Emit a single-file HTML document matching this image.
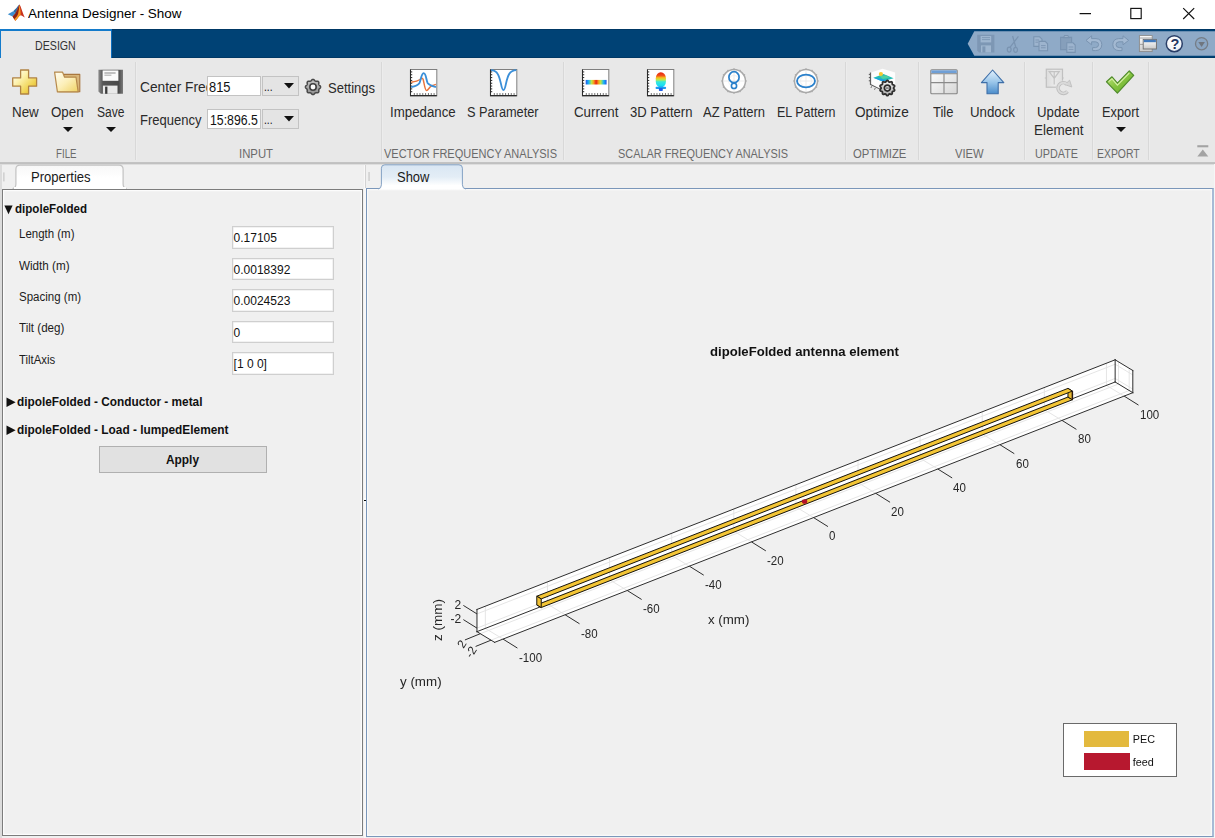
<!DOCTYPE html>
<html lang="en"><head><meta charset="utf-8"><title>Antenna Designer - Show</title>
<style>
html,body{margin:0;padding:0}
body{width:1215px;height:838px;overflow:hidden;position:relative;background:#f0f0f0;font-family:"Liberation Sans",sans-serif}
.a{position:absolute;box-sizing:border-box}
.t{position:absolute;white-space:nowrap;line-height:1;transform-origin:0 0;display:block}
svg{overflow:visible}
</style></head>
<body>
<div class="a" style="left:0px;top:0px;width:1215px;height:29px;background:#fff"></div>
<svg class="a" style="left:7px;top:4px" width="19" height="18" viewBox="0 0 19 18">
<path d="M0.8 10.2 L6.2 7.2 L8.4 9.6 L5.6 12.6 Z" fill="#3d8fce"/>
<path d="M6.2 7.2 C8.6 5.4 10.4 2.6 12.4 0.6 L10.6 6.5 L8.4 9.6 Z" fill="#2f6ea5"/>
<path d="M12.4 0.6 C13.8 1.6 15.6 9.5 17.8 13.4 C16 12.6 14.6 11.2 13.6 11.2 C12 11.4 10.4 15.2 8.2 16.8 L5.6 12.6 L8.4 9.6 Z" fill="#c8321f"/>
<path d="M5.6 12.6 L8.4 9.6 L10.6 6.0 L12.4 0.6 L12.2 6 L10.9 11.4 L8.3 15.4 L7.0 14.8 Z" fill="#8a2416"/>
<path d="M12.4 0.6 C13.3 4 13.7 8 13.6 11.2 C12 11.4 10.4 15.2 8.2 16.8 L7.3 15.3 C9.3 13.4 10.6 11.6 11.2 9.6 C11.8 7 12.2 4 12.4 0.6 Z" fill="#f6981d"/>
</svg>
<span class="t" style="left:28.30px;top:7.02px;font-size:13.33px;color:#000;transform:scaleX(1.0111);">Antenna Designer - Show</span>
<svg class="a" style="left:1075px;top:-0.5px" width="130" height="28" viewBox="0 0 130 28">
<path d="M4.6 13.6 H16" stroke="#111" stroke-width="1.25" fill="none"/>
<rect x="55.8" y="8.4" width="10.4" height="10.2" stroke="#111" stroke-width="1.15" fill="none"/>
<path d="M108.2 8.2 L119.2 19 M119.2 8.2 L108.2 19" stroke="#111" stroke-width="1.15" fill="none"/>
</svg>
<div class="a" style="left:0px;top:29px;width:1215px;height:29.3px;background:#004275;border-top:1px solid #003865;border-bottom:1px solid #003865"></div>
<div class="a" style="left:0px;top:29px;width:112.2px;height:29.3px;background:#e8e8e8;border-top:2px solid #147bcb;border-left:1px solid #147bcb;border-right:1.2px solid #0b6cbd"></div>
<span class="t" style="left:35.40px;top:39.42px;font-size:13.33px;color:#333;transform:scaleX(0.7983);">DESIGN</span>
<svg class="a" style="left:960px;top:29px" width="255" height="29" viewBox="0 0 255 29">
<path d="M7.7 14.7 L14.3 2.3 H255 V26.7 H14.3 Z" fill="#8faac7"/>
<g fill="#7d97b4" stroke="none">
<!-- save -->
<path d="M17.2 5.8 H34.4 V23.4 H19 L17.2 21.6 Z"/>
<rect x="20.6" y="7" width="10.6" height="6.4" fill="#9fb6cf"/>
<path d="M22 8.6 H30 M22 10.6 H30" stroke="#7d97b4" stroke-width="0.9"/>
<rect x="21" y="16.4" width="10" height="7" fill="#9fb6cf"/><rect x="22.4" y="17.4" width="3" height="6" fill="#7d97b4"/>
</g>
<!-- scissors -->
<g fill="none" stroke="#7a94b1" stroke-width="1.25">
<path d="M52.6 7 L56 19 M58.4 7.4 L49.8 18.6"/>
<ellipse cx="49.2" cy="20.6" rx="1.9" ry="2.5"/><ellipse cx="55.6" cy="20.8" rx="1.9" ry="2.5"/>
</g>
<!-- copy -->
<g fill="#9db4ce" stroke="#7a94b1" stroke-width="1.1">
<path d="M73.8 7.8 H79.6 L82 10.2 V17.4 H73.8 Z"/>
<path d="M79 12.4 H85.2 L87.6 14.8 V21.8 H79 Z"/>
<path d="M75.4 11 H79 M75.4 13.2 H78 M81 16.6 H85.6 M81 18.8 H85.6" stroke-width="0.9"/>
</g>
<!-- paste -->
<g fill="#9db4ce" stroke="#7a94b1" stroke-width="1.1">
<path d="M100.6 8.4 H111.6 V20.6 H100.6 Z" fill="#869fbb"/>
<path d="M103.6 8.6 L104.6 6.6 H107.8 L108.8 8.6 Z" fill="#a9bdd4"/>
<path d="M106.8 13.8 H113 L115.2 16 V23.4 H106.8 Z"/>
<path d="M108.6 18 H113.4 M108.6 20.4 H113.4" stroke-width="0.9"/>
</g>
<!-- undo -->
<g fill="#a3b9d2" stroke="#7a94b1" stroke-width="1">
<path d="M126 11.4 L131.6 6.8 V9.6 H136 Q141.6 10 141.8 15.6 Q141.6 21.4 135.6 21.6 H132.6 V18.6 H135.4 Q138.6 18.4 138.6 15.6 Q138.6 13 135.6 12.8 H131.6 V15.8 Z"/>
<path d="M168.6 11.4 L163 6.8 V9.6 H158.6 Q153 10 152.8 15.6 Q153 21.4 159 21.6 H162 V18.6 H159.2 Q156 18.4 156 15.6 Q156 13 159 12.8 H163 V15.8 Z"/>
</g>
<!-- windows -->
<defs><linearGradient id="gw" x1="0" y1="0" x2="0" y2="1"><stop offset="0" stop-color="#ffffff"/><stop offset="1" stop-color="#c9c9c9"/></linearGradient></defs>
<rect x="179.4" y="6.6" width="12.8" height="16" fill="url(#gw)" stroke="#8a8a8a" stroke-width="0.9"/>
<path d="M180 9 H192 M180 15.4 H183" stroke="#9a9a9a" stroke-width="0.9"/>
<rect x="183.2" y="10.4" width="13.2" height="9.6" fill="url(#gw)" stroke="#6d6d6d" stroke-width="0.9"/>
<rect x="183.7" y="10.8" width="12.2" height="2.4" fill="#4179bb"/>
<!-- help -->
<defs><radialGradient id="gh" cx="0.4" cy="0.3" r="0.8"><stop offset="0" stop-color="#ffffff"/><stop offset="0.7" stop-color="#f2f4f8"/><stop offset="1" stop-color="#c9d3e3"/></radialGradient></defs>
<circle cx="214.3" cy="14.7" r="8" fill="url(#gh)" stroke="#2a3f68" stroke-width="1.5"/>
<!-- dropdown -->
<circle cx="241.6" cy="14.7" r="6.1" fill="#8aa5c2" stroke="#767d86" stroke-width="1.3"/>
<path d="M238.3 12.9 H244.9 L241.6 17.9 Z" fill="#6f767f"/>
</svg>
<span class="t" style="left:1170.60px;top:36.73px;font-size:14.5px;color:#1f3561;font-weight:bold;">?</span>
<div class="a" style="left:0px;top:58px;width:1215px;height:104px;background:#e8e8e8"></div>
<div class="a" style="left:0px;top:161.8px;width:1215px;height:1.2px;background:#c3c3c3"></div>
<div class="a" style="left:0px;top:163px;width:1215px;height:0.9px;background:#c0c0c0"></div>
<div class="a" style="left:0px;top:163.9px;width:1215px;height:0.8px;background:#dedede"></div>
<div class="a" style="left:135px;top:62px;width:1.2px;height:98px;background:#d8d8d8"></div>
<div class="a" style="left:136.2px;top:62px;width:1px;height:98px;background:#ececec"></div>
<div class="a" style="left:381px;top:62px;width:1.2px;height:98px;background:#d8d8d8"></div>
<div class="a" style="left:382.2px;top:62px;width:1px;height:98px;background:#ececec"></div>
<div class="a" style="left:563px;top:62px;width:1.2px;height:98px;background:#d8d8d8"></div>
<div class="a" style="left:564.2px;top:62px;width:1px;height:98px;background:#ececec"></div>
<div class="a" style="left:845px;top:62px;width:1.2px;height:98px;background:#d8d8d8"></div>
<div class="a" style="left:846.2px;top:62px;width:1px;height:98px;background:#ececec"></div>
<div class="a" style="left:918px;top:62px;width:1.2px;height:98px;background:#d8d8d8"></div>
<div class="a" style="left:919.2px;top:62px;width:1px;height:98px;background:#ececec"></div>
<div class="a" style="left:1024px;top:62px;width:1.2px;height:98px;background:#d8d8d8"></div>
<div class="a" style="left:1025.2px;top:62px;width:1px;height:98px;background:#ececec"></div>
<div class="a" style="left:1092px;top:62px;width:1.2px;height:98px;background:#d8d8d8"></div>
<div class="a" style="left:1093.2px;top:62px;width:1px;height:98px;background:#ececec"></div>
<div class="a" style="left:1148px;top:62px;width:1.2px;height:98px;background:#d8d8d8"></div>
<div class="a" style="left:1149.2px;top:62px;width:1px;height:98px;background:#ececec"></div>
<span class="t" style="left:11.55px;top:105.45px;font-size:14px;color:#2a2a2a;transform:scaleX(0.9533);">New</span>
<span class="t" style="left:51.40px;top:105.45px;font-size:14px;color:#2a2a2a;transform:scaleX(0.9519);">Open</span>
<span class="t" style="left:96.75px;top:105.45px;font-size:14px;color:#2a2a2a;transform:scaleX(0.8618);">Save</span>
<svg class="a" style="left:63.3px;top:127px" width="10" height="5" viewBox="0 0 10 5"><path d="M0 0 H10 L5.0 5 Z" fill="#111"/></svg>
<svg class="a" style="left:106.1px;top:127px" width="10" height="5" viewBox="0 0 10 5"><path d="M0 0 H10 L5.0 5 Z" fill="#111"/></svg>
<span class="t" style="left:55.55px;top:148.44px;font-size:12px;color:#6a6a6a;transform:scaleX(0.8089);">FILE</span>
<span class="t" style="left:140.40px;top:79.85px;font-size:14px;color:#2a2a2a;transform:scaleX(0.9826);clip-path:inset(0 6.5px 0 0);">Center Freq</span>
<span class="t" style="left:140.40px;top:112.65px;font-size:14px;color:#2a2a2a;transform:scaleX(0.9298);">Frequency</span>
<span class="t" style="left:239.00px;top:148.44px;font-size:12px;color:#6a6a6a;transform:scaleX(0.9444);">INPUT</span>
<div class="a" style="left:207px;top:76px;width:54px;height:20px;background:#fff;border:1px solid #c3c3c3"></div>
<div class="a" style="left:262px;top:76px;width:37px;height:20px;background:#e4e4e4;border:1px solid #c3c3c3"></div>
<span class="t" style="left:263.60px;top:79.92px;font-size:13.33px;color:#111;transform:scaleX(0.7741);">...</span>
<svg class="a" style="left:284.0px;top:83px" width="10" height="5.5" viewBox="0 0 10 5.5"><path d="M0 0 H10 L5.0 5.5 Z" fill="#111"/></svg>
<div class="a" style="left:207px;top:109px;width:54px;height:20px;background:#fff;border:1px solid #c3c3c3"></div>
<div class="a" style="left:262px;top:109px;width:37px;height:20px;background:#e4e4e4;border:1px solid #c3c3c3"></div>
<span class="t" style="left:263.60px;top:112.92px;font-size:13.33px;color:#111;transform:scaleX(0.7741);">...</span>
<svg class="a" style="left:284.0px;top:116px" width="10" height="5.5" viewBox="0 0 10 5.5"><path d="M0 0 H10 L5.0 5.5 Z" fill="#111"/></svg>
<span class="t" style="left:208.80px;top:79.75px;font-size:14px;color:#111;transform:scaleX(0.9204);">815</span>
<span class="t" style="left:209.60px;top:112.65px;font-size:14px;color:#111;transform:scaleX(0.8771);">15:896.5</span>
<svg class="a" style="left:304.2px;top:78.3px" width="18" height="18" viewBox="0 0 18 18">
<defs><linearGradient id="ggr" x1="0" y1="0" x2="0" y2="1"><stop offset="0" stop-color="#c4c4c4"/><stop offset="1" stop-color="#8e8e8e"/></linearGradient></defs>
<g transform="translate(9,9)">
<path d="M0.00 -7.62 L0.49 -7.54 L0.96 -7.29 L1.37 -6.87 L1.72 -6.42 L2.07 -6.11 L2.44 -5.89 L2.85 -5.78 L3.32 -5.75 L3.89 -5.82 L4.48 -5.84 L4.98 -5.68 L5.39 -5.39 L5.68 -4.98 L5.84 -4.48 L5.82 -3.89 L5.75 -3.32 L5.78 -2.85 L5.89 -2.44 L6.11 -2.07 L6.42 -1.72 L6.87 -1.37 L7.29 -0.96 L7.54 -0.49 L7.62 -0.00 L7.54 0.49 L7.29 0.96 L6.87 1.37 L6.42 1.72 L6.11 2.07 L5.89 2.44 L5.78 2.85 L5.75 3.32 L5.82 3.89 L5.84 4.48 L5.68 4.98 L5.39 5.39 L4.98 5.68 L4.48 5.84 L3.89 5.82 L3.32 5.75 L2.85 5.78 L2.44 5.89 L2.07 6.11 L1.72 6.42 L1.37 6.87 L0.96 7.29 L0.49 7.54 L0.00 7.62 L-0.49 7.54 L-0.96 7.29 L-1.37 6.87 L-1.72 6.42 L-2.07 6.11 L-2.44 5.89 L-2.85 5.78 L-3.32 5.75 L-3.89 5.82 L-4.48 5.84 L-4.98 5.68 L-5.39 5.39 L-5.68 4.98 L-5.84 4.48 L-5.82 3.89 L-5.75 3.32 L-5.78 2.85 L-5.89 2.44 L-6.11 2.07 L-6.42 1.72 L-6.87 1.37 L-7.29 0.96 L-7.54 0.49 L-7.62 0.00 L-7.54 -0.49 L-7.29 -0.96 L-6.87 -1.37 L-6.42 -1.72 L-6.11 -2.07 L-5.89 -2.44 L-5.78 -2.85 L-5.75 -3.32 L-5.82 -3.89 L-5.84 -4.48 L-5.68 -4.98 L-5.39 -5.39 L-4.98 -5.68 L-4.48 -5.84 L-3.89 -5.82 L-3.32 -5.75 L-2.85 -5.78 L-2.44 -5.89 L-2.07 -6.11 L-1.72 -6.42 L-1.37 -6.87 L-0.96 -7.29 L-0.49 -7.54 Z" fill="url(#ggr)" stroke="#484848" stroke-width="1.5" stroke-linejoin="round"/>
<circle r="3.2" fill="#fafafa" stroke="#404040" stroke-width="1.6"/>
</g></svg>
<span class="t" style="left:328.00px;top:80.75px;font-size:14px;color:#2a2a2a;transform:scaleX(0.9291);">Settings</span>
<span class="t" style="left:390.35px;top:105.45px;font-size:14px;color:#2a2a2a;transform:scaleX(0.9485);">Impedance</span>
<span class="t" style="left:467.20px;top:105.45px;font-size:14px;color:#2a2a2a;transform:scaleX(0.9111);">S Parameter</span>
<span class="t" style="left:383.50px;top:148.44px;font-size:12px;color:#6a6a6a;transform:scaleX(0.9167);">VECTOR FREQUENCY ANALYSIS</span>
<span class="t" style="left:573.60px;top:105.45px;font-size:14px;color:#2a2a2a;transform:scaleX(0.9511);">Current</span>
<span class="t" style="left:629.55px;top:105.45px;font-size:14px;color:#2a2a2a;transform:scaleX(0.9339);">3D Pattern</span>
<span class="t" style="left:703.30px;top:105.45px;font-size:14px;color:#2a2a2a;transform:scaleX(0.9265);">AZ Pattern</span>
<span class="t" style="left:777.25px;top:105.45px;font-size:14px;color:#2a2a2a;transform:scaleX(0.8913);">EL Pattern</span>
<span class="t" style="left:617.50px;top:148.44px;font-size:12px;color:#6a6a6a;transform:scaleX(0.9093);">SCALAR FREQUENCY ANALYSIS</span>
<span class="t" style="left:854.75px;top:105.45px;font-size:14px;color:#2a2a2a;transform:scaleX(0.9722);">Optimize</span>
<span class="t" style="left:853.00px;top:148.44px;font-size:12px;color:#6a6a6a;transform:scaleX(0.9423);">OPTIMIZE</span>
<span class="t" style="left:933.20px;top:105.45px;font-size:14px;color:#2a2a2a;transform:scaleX(0.9256);">Tile</span>
<span class="t" style="left:970.20px;top:105.45px;font-size:14px;color:#2a2a2a;transform:scaleX(0.9480);">Undock</span>
<span class="t" style="left:954.75px;top:148.44px;font-size:12px;color:#6a6a6a;transform:scaleX(0.9358);">VIEW</span>
<span class="t" style="left:1037.40px;top:105.45px;font-size:14px;color:#2a2a2a;transform:scaleX(0.9436);">Update</span>
<span class="t" style="left:1033.80px;top:123.45px;font-size:14px;color:#2a2a2a;transform:scaleX(0.9618);">Element</span>
<span class="t" style="left:1034.50px;top:148.44px;font-size:12px;color:#6a6a6a;transform:scaleX(0.8999);">UPDATE</span>
<span class="t" style="left:1101.70px;top:105.45px;font-size:14px;color:#2a2a2a;transform:scaleX(0.9144);">Export</span>
<svg class="a" style="left:1115.5px;top:127px" width="10" height="5" viewBox="0 0 10 5"><path d="M0 0 H10 L5.0 5 Z" fill="#111"/></svg>
<span class="t" style="left:1096.80px;top:148.44px;font-size:12px;color:#6a6a6a;transform:scaleX(0.8671);">EXPORT</span>
<svg class="a" style="left:1197px;top:145px" width="12" height="12" viewBox="0 0 12 12"><rect x="0.3" y="0.2" width="11" height="2.1" fill="#a3a3a3"/><path d="M0.3 11.4 L5.8 4.6 L11.3 11.4 Z" fill="#a3a3a3"/></svg>
<svg class="a" style="left:12px;top:69px" width="26" height="26" viewBox="0 0 26 26">
<defs><linearGradient id="gp" x1="0" y1="0" x2="1" y2="1"><stop offset="0" stop-color="#ffffff"/><stop offset="0.35" stop-color="#fdf2ae"/><stop offset="0.7" stop-color="#f0d352"/><stop offset="1" stop-color="#dcae22"/></linearGradient></defs>
<path d="M8.6 1 H16.6 V8.9 H24.6 V17.2 H16.6 V25 H8.6 V17.2 H0.7 V8.9 H8.6 Z" fill="url(#gp)" stroke="#b08243" stroke-width="1.3" stroke-linejoin="round"/>
</svg>
<svg class="a" style="left:53px;top:70px" width="29" height="24" viewBox="0 0 29 24">
<defs><linearGradient id="gf" x1="0" y1="0" x2="1" y2="1"><stop offset="0" stop-color="#fffdf2"/><stop offset="0.5" stop-color="#fcefb8"/><stop offset="1" stop-color="#efd264"/></linearGradient></defs>
<path d="M10 4.4 H26.8 V21.8 H6 Z" fill="#d9b679" stroke="#a9773f" stroke-width="1.1" stroke-linejoin="round"/>
<path d="M1.6 2.2 H9.6 L11.6 7.2 H23 L25.2 21.8 H4.4 Z" fill="url(#gf)" stroke="#b78a4c" stroke-width="1.2" stroke-linejoin="round"/>
</svg>
<svg class="a" style="left:98px;top:69px" width="26" height="26" viewBox="0 0 26 26">
<defs><linearGradient id="gs" x1="0" y1="0" x2="1" y2="0"><stop offset="0" stop-color="#8d8d8d"/><stop offset="0.18" stop-color="#555"/><stop offset="0.82" stop-color="#4a4a4a"/><stop offset="1" stop-color="#7b7b7b"/></linearGradient></defs>
<path d="M0.4 0.8 H25 V24.8 H2.8 L0.4 22.6 Z" fill="url(#gs)"/>
<rect x="4.6" y="1.4" width="15.8" height="10.4" fill="#fbfbfb"/>
<rect x="6.4" y="3.4" width="11.2" height="1.2" fill="#9a9a9a"/><rect x="6.4" y="5.6" width="7" height="1.2" fill="#b5b5b5"/>
<rect x="4.9" y="16.6" width="14.6" height="8.2" fill="#e9e9e9"/>
<rect x="7.1" y="17.6" width="2.3" height="7.2" fill="#3a3a3a"/>
</svg>
<svg class="a" style="left:409.6px;top:68.5px" width="27.3" height="27.3" viewBox="0 0 28 28"><rect x="0.5" y="0.5" width="27" height="27" fill="#fff" stroke="#7c7c7c" stroke-width="1"/>
<path d="M0.5 0.5 V27.3 H27.5" fill="none" stroke="#2b2b2b" stroke-width="1.1"/><rect x="3.9" y="25" width="1" height="1.3" fill="#222"/><rect x="6.8" y="25" width="1" height="1.3" fill="#222"/><rect x="9.7" y="25" width="1" height="1.3" fill="#222"/><rect x="12.6" y="25" width="1" height="1.3" fill="#222"/><rect x="15.5" y="25" width="1" height="1.3" fill="#222"/><rect x="18.4" y="25" width="1" height="1.3" fill="#222"/><rect x="21.3" y="25" width="1" height="1.3" fill="#222"/><rect x="24.2" y="25" width="1" height="1.3" fill="#222"/><rect x="1" y="2.5" width="1.3" height="1" fill="#222"/><rect x="1" y="5.4" width="1.3" height="1" fill="#222"/><rect x="1" y="8.3" width="1.3" height="1" fill="#222"/><rect x="1" y="11.2" width="1.3" height="1" fill="#222"/><rect x="1" y="14.1" width="1.3" height="1" fill="#222"/><rect x="1" y="17.0" width="1.3" height="1" fill="#222"/><rect x="1" y="19.9" width="1.3" height="1" fill="#222"/><rect x="1" y="22.8" width="1.3" height="1" fill="#222"/><path d="M1.2 13.6 C5 13 8 12.4 10.2 10.8 C12 9.2 12.8 8.6 13.6 11 C14.6 15 15.4 22 17 22.2 C18.8 22.2 20 17.6 22.4 17.2 C24 16.8 25.6 16.2 26.6 15.8" fill="none" stroke="#e8743b" stroke-width="1.5"/>
<path d="M1.2 18.6 C4 18 8 17 9.6 14.6 C11 12 11.6 4.4 14 4.2 C16.6 4.2 16.6 12 18.2 14.6 C20 17 23.4 17.6 26.6 18.6" fill="none" stroke="#3b8fd8" stroke-width="1.9"/></svg>
<svg class="a" style="left:489.5px;top:68.5px" width="27.3" height="27.3" viewBox="0 0 28 28"><rect x="0.5" y="0.5" width="27" height="27" fill="#fff" stroke="#7c7c7c" stroke-width="1"/>
<path d="M0.5 0.5 V27.3 H27.5" fill="none" stroke="#2b2b2b" stroke-width="1.1"/><rect x="3.9" y="25" width="1" height="1.3" fill="#222"/><rect x="6.8" y="25" width="1" height="1.3" fill="#222"/><rect x="9.7" y="25" width="1" height="1.3" fill="#222"/><rect x="12.6" y="25" width="1" height="1.3" fill="#222"/><rect x="15.5" y="25" width="1" height="1.3" fill="#222"/><rect x="18.4" y="25" width="1" height="1.3" fill="#222"/><rect x="21.3" y="25" width="1" height="1.3" fill="#222"/><rect x="24.2" y="25" width="1" height="1.3" fill="#222"/><rect x="1" y="2.5" width="1.3" height="1" fill="#222"/><rect x="1" y="5.4" width="1.3" height="1" fill="#222"/><rect x="1" y="8.3" width="1.3" height="1" fill="#222"/><rect x="1" y="11.2" width="1.3" height="1" fill="#222"/><rect x="1" y="14.1" width="1.3" height="1" fill="#222"/><rect x="1" y="17.0" width="1.3" height="1" fill="#222"/><rect x="1" y="19.9" width="1.3" height="1" fill="#222"/><rect x="1" y="22.8" width="1.3" height="1" fill="#222"/><path d="M1 1.2 C8 1.2 9.6 8 11.2 15 C12 19 12.6 21.6 13.8 21.6 C15 21.6 15.6 19 16.4 15 C18 8 19.6 1.2 27 1.2" fill="none" stroke="#3b8fd8" stroke-width="1.9"/></svg>
<svg class="a" style="left:582.0999999999999px;top:68.5px" width="27.3" height="27.3" viewBox="0 0 28 28"><rect x="0.5" y="0.5" width="27" height="27" fill="#fff" stroke="#7c7c7c" stroke-width="1"/>
<path d="M0.5 0.5 V27.3 H27.5" fill="none" stroke="#2b2b2b" stroke-width="1.1"/><rect x="3.9" y="25" width="1" height="1.3" fill="#222"/><rect x="6.8" y="25" width="1" height="1.3" fill="#222"/><rect x="9.7" y="25" width="1" height="1.3" fill="#222"/><rect x="12.6" y="25" width="1" height="1.3" fill="#222"/><rect x="15.5" y="25" width="1" height="1.3" fill="#222"/><rect x="18.4" y="25" width="1" height="1.3" fill="#222"/><rect x="21.3" y="25" width="1" height="1.3" fill="#222"/><rect x="24.2" y="25" width="1" height="1.3" fill="#222"/><rect x="1" y="2.5" width="1.3" height="1" fill="#222"/><rect x="1" y="5.4" width="1.3" height="1" fill="#222"/><rect x="1" y="8.3" width="1.3" height="1" fill="#222"/><rect x="1" y="11.2" width="1.3" height="1" fill="#222"/><rect x="1" y="14.1" width="1.3" height="1" fill="#222"/><rect x="1" y="17.0" width="1.3" height="1" fill="#222"/><rect x="1" y="19.9" width="1.3" height="1" fill="#222"/><rect x="1" y="22.8" width="1.3" height="1" fill="#222"/><defs><linearGradient id="gc" x1="0" y1="0" x2="1" y2="0"><stop offset="0" stop-color="#1f55e8"/><stop offset="0.14" stop-color="#19b6f3"/><stop offset="0.28" stop-color="#b9e84a"/><stop offset="0.38" stop-color="#f6a21a"/><stop offset="0.5" stop-color="#e8230f"/><stop offset="0.62" stop-color="#f6a21a"/><stop offset="0.72" stop-color="#b9e84a"/><stop offset="0.86" stop-color="#19b6f3"/><stop offset="1" stop-color="#1f55e8"/></linearGradient></defs>
<rect x="3.8" y="11.2" width="21.4" height="4.7" fill="url(#gc)"/></svg>
<svg class="a" style="left:646.9px;top:68.5px" width="27.3" height="27.3" viewBox="0 0 28 28"><rect x="0.5" y="0.5" width="27" height="27" fill="#fff" stroke="#7c7c7c" stroke-width="1"/>
<path d="M0.5 0.5 V27.3 H27.5" fill="none" stroke="#2b2b2b" stroke-width="1.1"/><rect x="3.9" y="25" width="1" height="1.3" fill="#222"/><rect x="6.8" y="25" width="1" height="1.3" fill="#222"/><rect x="9.7" y="25" width="1" height="1.3" fill="#222"/><rect x="12.6" y="25" width="1" height="1.3" fill="#222"/><rect x="15.5" y="25" width="1" height="1.3" fill="#222"/><rect x="18.4" y="25" width="1" height="1.3" fill="#222"/><rect x="21.3" y="25" width="1" height="1.3" fill="#222"/><rect x="24.2" y="25" width="1" height="1.3" fill="#222"/><rect x="1" y="2.5" width="1.3" height="1" fill="#222"/><rect x="1" y="5.4" width="1.3" height="1" fill="#222"/><rect x="1" y="8.3" width="1.3" height="1" fill="#222"/><rect x="1" y="11.2" width="1.3" height="1" fill="#222"/><rect x="1" y="14.1" width="1.3" height="1" fill="#222"/><rect x="1" y="17.0" width="1.3" height="1" fill="#222"/><rect x="1" y="19.9" width="1.3" height="1" fill="#222"/><rect x="1" y="22.8" width="1.3" height="1" fill="#222"/><defs><linearGradient id="g3" x1="0" y1="0" x2="0" y2="1"><stop offset="0" stop-color="#e8230f"/><stop offset="0.22" stop-color="#f0531a"/><stop offset="0.36" stop-color="#f8c01a"/><stop offset="0.5" stop-color="#b6ea52"/><stop offset="0.62" stop-color="#39e8d8"/><stop offset="0.85" stop-color="#19e0f3"/><stop offset="1" stop-color="#19b6f3"/></linearGradient></defs>
<rect x="9" y="3.4" width="10.4" height="15.6" rx="5.2" ry="6" fill="url(#g3)"/>
<rect x="8.8" y="18.2" width="10.8" height="2.2" rx="1" fill="#1a9bf0"/>
<rect x="12.2" y="19.6" width="4" height="3" rx="0.8" fill="#1f5fe8"/></svg>
<svg class="a" style="left:719.9px;top:67.1px" width="28" height="28" viewBox="0 0 28 28"><g transform="translate(14,14)"><path d="M0 -11 V-12.8" transform="rotate(0)" stroke="#a6a6a6" stroke-width="1.2"/><path d="M0 -11 V-12.8" transform="rotate(30)" stroke="#a6a6a6" stroke-width="1.2"/><path d="M0 -11 V-12.8" transform="rotate(60)" stroke="#a6a6a6" stroke-width="1.2"/><path d="M0 -11 V-12.8" transform="rotate(90)" stroke="#a6a6a6" stroke-width="1.2"/><path d="M0 -11 V-12.8" transform="rotate(120)" stroke="#a6a6a6" stroke-width="1.2"/><path d="M0 -11 V-12.8" transform="rotate(150)" stroke="#a6a6a6" stroke-width="1.2"/><path d="M0 -11 V-12.8" transform="rotate(180)" stroke="#a6a6a6" stroke-width="1.2"/><path d="M0 -11 V-12.8" transform="rotate(210)" stroke="#a6a6a6" stroke-width="1.2"/><path d="M0 -11 V-12.8" transform="rotate(240)" stroke="#a6a6a6" stroke-width="1.2"/><path d="M0 -11 V-12.8" transform="rotate(270)" stroke="#a6a6a6" stroke-width="1.2"/><path d="M0 -11 V-12.8" transform="rotate(300)" stroke="#a6a6a6" stroke-width="1.2"/><path d="M0 -11 V-12.8" transform="rotate(330)" stroke="#a6a6a6" stroke-width="1.2"/><circle r="11.5" fill="#fff" stroke="#a9a9a9" stroke-width="1.5"/>
<path d="M-11 0 H11 M0 -11 V11" stroke="#e6e6e6" stroke-width="0.8"/><circle r="5.5" fill="none" stroke="#ececec" stroke-width="0.8"/><ellipse cx="0" cy="-3.8" rx="5.1" ry="5.5" fill="none" stroke="#2a80cb" stroke-width="1.7"/><circle cx="0" cy="4.9" r="2.6" fill="#fff" stroke="#2a80cb" stroke-width="1.6"/></g></svg>
<svg class="a" style="left:791.8px;top:67.1px" width="28" height="28" viewBox="0 0 28 28"><g transform="translate(14,14)"><path d="M0 -11 V-12.8" transform="rotate(0)" stroke="#a6a6a6" stroke-width="1.2"/><path d="M0 -11 V-12.8" transform="rotate(30)" stroke="#a6a6a6" stroke-width="1.2"/><path d="M0 -11 V-12.8" transform="rotate(60)" stroke="#a6a6a6" stroke-width="1.2"/><path d="M0 -11 V-12.8" transform="rotate(90)" stroke="#a6a6a6" stroke-width="1.2"/><path d="M0 -11 V-12.8" transform="rotate(120)" stroke="#a6a6a6" stroke-width="1.2"/><path d="M0 -11 V-12.8" transform="rotate(150)" stroke="#a6a6a6" stroke-width="1.2"/><path d="M0 -11 V-12.8" transform="rotate(180)" stroke="#a6a6a6" stroke-width="1.2"/><path d="M0 -11 V-12.8" transform="rotate(210)" stroke="#a6a6a6" stroke-width="1.2"/><path d="M0 -11 V-12.8" transform="rotate(240)" stroke="#a6a6a6" stroke-width="1.2"/><path d="M0 -11 V-12.8" transform="rotate(270)" stroke="#a6a6a6" stroke-width="1.2"/><path d="M0 -11 V-12.8" transform="rotate(300)" stroke="#a6a6a6" stroke-width="1.2"/><path d="M0 -11 V-12.8" transform="rotate(330)" stroke="#a6a6a6" stroke-width="1.2"/><circle r="11.5" fill="#fff" stroke="#a9a9a9" stroke-width="1.5"/>
<path d="M-11 0 H11 M0 -11 V11" stroke="#e6e6e6" stroke-width="0.8"/><circle r="5.5" fill="none" stroke="#ececec" stroke-width="0.8"/><ellipse rx="9" ry="6.4" fill="none" stroke="#2a80cb" stroke-width="1.8"/></g></svg>
<svg class="a" style="left:866px;top:67px" width="32" height="30" viewBox="0 0 32 30">
<defs><linearGradient id="gog" x1="0" y1="0" x2="0" y2="1"><stop offset="0" stop-color="#f4f4f4"/><stop offset="1" stop-color="#a8a8a8"/></linearGradient></defs>
<path d="M5.9 5.2 L16.6 1.7 L29.1 5.6 V21 L17.4 24.4 L5.9 17.6 Z" fill="#fdfdfd"/>
<path d="M4.4 5.6 V17.4 L14.6 22.4" fill="none" stroke="#555" stroke-width="1.05"/>
<path d="M2.8 7.4 H4.4 M2.8 10.6 H4.4 M2.8 13.8 H4.4 M5.6 19.4 L5 20.8 M9.2 21.2 L8.6 22.6" stroke="#555" stroke-width="1" fill="none"/>
<path d="M7.4 10.7 L17.5 6.9 L27.6 11.2 L16.6 14.6 Z" fill="#22bdb6"/>
<path d="M7.4 10.7 L16.6 14.6 L21 13.2 L12.6 11.6 Z" fill="#1d9be6"/>
<path d="M13.4 9.2 L20 8.2 L23.6 10.4 L17 12 Z" fill="#4fd0a0"/>
<circle cx="14.9" cy="7" r="2.1" fill="#f6c92e"/>
<g transform="translate(21.35,21.06)">
<path d="M0.00 -7.60 L0.49 -7.47 L0.93 -7.08 L1.28 -6.45 L1.62 -6.06 L1.99 -5.88 L2.44 -5.88 L2.99 -6.07 L3.65 -6.32 L4.20 -6.28 L4.61 -6.01 L4.86 -5.54 L4.88 -4.88 L4.83 -4.24 L4.93 -3.79 L5.19 -3.47 L5.63 -3.25 L6.31 -3.11 L6.86 -2.84 L7.19 -2.44 L7.27 -1.95 L7.09 -1.41 L6.61 -0.87 L6.30 -0.41 L6.20 -0.00 L6.30 0.41 L6.61 0.87 L7.09 1.41 L7.27 1.95 L7.19 2.44 L6.86 2.84 L6.31 3.11 L5.63 3.25 L5.19 3.47 L4.93 3.79 L4.83 4.24 L4.88 4.88 L4.86 5.54 L4.61 6.01 L4.20 6.28 L3.65 6.32 L2.99 6.07 L2.44 5.88 L1.99 5.88 L1.62 6.06 L1.28 6.45 L0.93 7.08 L0.49 7.47 L0.00 7.60 L-0.49 7.47 L-0.93 7.08 L-1.28 6.45 L-1.62 6.06 L-1.99 5.88 L-2.44 5.88 L-2.99 6.07 L-3.65 6.32 L-4.20 6.28 L-4.61 6.01 L-4.86 5.54 L-4.88 4.88 L-4.83 4.24 L-4.93 3.79 L-5.19 3.47 L-5.63 3.25 L-6.31 3.11 L-6.86 2.84 L-7.19 2.44 L-7.27 1.95 L-7.09 1.41 L-6.61 0.87 L-6.30 0.41 L-6.20 0.00 L-6.30 -0.41 L-6.61 -0.87 L-7.09 -1.41 L-7.27 -1.95 L-7.19 -2.44 L-6.86 -2.84 L-6.31 -3.11 L-5.63 -3.25 L-5.19 -3.47 L-4.93 -3.79 L-4.83 -4.24 L-4.88 -4.88 L-4.86 -5.54 L-4.61 -6.01 L-4.20 -6.28 L-3.65 -6.32 L-2.99 -6.07 L-2.44 -5.88 L-1.99 -5.88 L-1.62 -6.06 L-1.28 -6.45 L-0.93 -7.08 L-0.49 -7.47 Z" fill="url(#gog)" stroke="#2f2f2f" stroke-width="1.75" stroke-linejoin="round"/>
<circle r="3.0" fill="#dcdcdc" stroke="#2a2a2a" stroke-width="1.7"/>
<rect x="-1.4" y="-0.5" width="2.8" height="1" fill="#444"/>
</g>
</svg>
<svg class="a" style="left:929.5px;top:69px" width="28" height="26" viewBox="0 0 28 26">
<defs><linearGradient id="gtl" x1="0" y1="0" x2="1" y2="1"><stop offset="0" stop-color="#fff"/><stop offset="1" stop-color="#d6d6d6"/></linearGradient></defs>
<rect x="0.8" y="0.8" width="26.4" height="24" rx="1" fill="url(#gtl)" stroke="#858585" stroke-width="1.1"/>
<rect x="1.3" y="1.3" width="25.4" height="3" fill="#6f9fd6"/>
<path d="M1 4.8 H27 M1 13.6 H27 M14 4.8 V24.6" stroke="#8a8a8a" stroke-width="1.1" fill="none"/>
</svg>
<svg class="a" style="left:980px;top:69px" width="26" height="26" viewBox="0 0 26 26">
<defs><linearGradient id="gu" x1="0" y1="0" x2="0" y2="1"><stop offset="0" stop-color="#e4f1fc"/><stop offset="0.5" stop-color="#9cc7ea"/><stop offset="1" stop-color="#4a8ccb"/></linearGradient></defs>
<path d="M12.6 1 L23.8 13.6 H18.2 V24.8 H7 V13.6 H1.4 Z" fill="url(#gu)" stroke="#3f6fa8" stroke-width="1.1" stroke-linejoin="round"/>
</svg>
<svg class="a" style="left:1044px;top:67px" width="30" height="30" viewBox="0 0 30 30">
<defs><linearGradient id="gue" x1="0" y1="0" x2="1" y2="0"><stop offset="0" stop-color="#dcdcdc"/><stop offset="0.5" stop-color="#ebebeb"/><stop offset="1" stop-color="#e0e0e0"/></linearGradient></defs>
<rect x="2.3" y="2.2" width="16.2" height="18" fill="url(#gue)" stroke="#c0c0c0" stroke-width="1.2"/>
<path d="M5.2 4.6 H15.2 L10.2 11.4 Z M10.2 4.6 V17.6" fill="none" stroke="#c3c3c3" stroke-width="1.2"/>
<path d="M0.8 11 H2 M18.8 11 H19.8" stroke="#c3c3c3" stroke-width="1.2"/>
<circle cx="19.4" cy="21.06" r="7.6" fill="#e8e8e8"/>
<path d="M22.8 17.0 A5.3 5.3 0 1 0 23.46 24.47" fill="none" stroke="#bdbdbd" stroke-width="3.6"/>
<path d="M27.8 20 L25.6 13.2 L20.9 17.6 Z" fill="#d6d6d6" stroke="#bdbdbd" stroke-width="0.9" stroke-linejoin="round"/>
<path d="M22.8 17.0 A5.3 5.3 0 1 0 23.46 24.47" fill="none" stroke="#dadada" stroke-width="1.9"/>
</svg>
<svg class="a" style="left:1105px;top:69px" width="30" height="26" viewBox="0 0 30 26">
<defs><linearGradient id="gck" x1="0" y1="0" x2="1" y2="1"><stop offset="0" stop-color="#c8e98a"/><stop offset="0.5" stop-color="#86c440"/><stop offset="1" stop-color="#5da528"/></linearGradient></defs>
<path d="M1.5 12.8 L7 7.8 L12.4 14.2 L24.3 1.9 L28.7 6.3 L12.4 24.1 Z" fill="url(#gck)" stroke="#4e8a2a" stroke-width="1.2" stroke-linejoin="round"/>
<path d="M3.6 12.7 L7 9.8 L12.4 16.2 L24.3 4 " fill="none" stroke="#d4efa2" stroke-width="1.1"/>
</svg>
<svg class="a" style="left:0px;top:162.6px" width="200" height="28" viewBox="0 0 200 28">
<defs><linearGradient id="gtab" x1="0" y1="0" x2="0" y2="1"><stop offset="0" stop-color="#f7f7f7"/><stop offset="0.55" stop-color="#ffffff"/><stop offset="1" stop-color="#ffffff"/></linearGradient></defs>
<path d="M12.6 25.6 Q15.9 25 15.9 21 V6.2 Q15.9 2.1 20 2.1 H119 Q123.1 2.1 123.1 6.2 V21 Q123.1 25 126.6 25.6 Z" fill="url(#gtab)" stroke="#c2c2c2" stroke-width="1.2"/>
<rect x="3.1" y="9.4" width="1.5" height="9" fill="#cfcfcf"/>
</svg>
<span class="t" style="left:31.30px;top:169.85px;font-size:14px;color:#1a1a1a;transform:scaleX(0.9340);">Properties</span>
<div class="a" style="left:0px;top:164px;width:2px;height:674px;background:#dcdcdc"></div>
<div class="a" style="left:1.6px;top:188.8px;width:361.8px;height:647.2px;border:1.3px solid #7c7c7c;box-shadow:inset 0 0 0 1.2px #fcfcfc;background:#f0f0f0"></div>
<div class="a" style="left:14px;top:187.2px;width:112px;height:1.7px;background:#fff"></div>
<div class="a" style="left:363.6px;top:165px;width:2.2px;height:673px;background:#f9f8f8"></div>
<div class="a" style="left:365.3px;top:164.5px;width:1.1px;height:23.5px;background:#d3d3d3"></div>
<div class="a" style="left:363.7px;top:498px;width:2.6px;height:4.8px;background:#fff"></div>
<div class="a" style="left:364.0px;top:499.5px;width:2.1px;height:1.7px;background:#050505"></div>
<div class="a" style="left:365.8px;top:187.9px;width:848.3px;height:649px;border:1.3px solid #7b97ba;border-right:2.1px solid #a6bbd6;box-shadow:inset 0 0 0 1.2px #f9f9f9;background:#f0f0f0"></div>
<div class="a" style="left:1214.1px;top:164px;width:1px;height:674px;background:#f6f6f6"></div>
<svg class="a" style="left:366px;top:163px" width="120" height="28" viewBox="0 0 120 28">
<defs><linearGradient id="gtb2" x1="0" y1="0" x2="0" y2="1"><stop offset="0" stop-color="#d9e6f3"/><stop offset="0.5" stop-color="#e3edf6"/><stop offset="0.85" stop-color="#ffffff"/><stop offset="1" stop-color="#ffffff"/></linearGradient></defs>
<path d="M12 26.2 Q15.4 25.6 15.4 21.8 V5.2 Q15.4 1.8 18.8 1.8 H93 Q96.4 1.8 96.4 5.2 V21.8 Q96.4 25.6 100 26.2 Z" fill="url(#gtb2)"/>
<path d="M12 26 Q15.4 25.6 15.4 21.8 V5.2 Q15.4 1.8 18.8 1.8 H93 Q96.4 1.8 96.4 5.2 V21.8 Q96.4 25.6 100 26" fill="none" stroke="#83a1c4" stroke-width="1.0"/>
<rect x="2.3" y="9" width="1.5" height="9" fill="#cfcfcf"/>
</svg>
<span class="t" style="left:396.50px;top:169.85px;font-size:14px;color:#1a1a1a;transform:scaleX(0.9251);">Show</span>
<svg class="a" style="left:4px;top:204.5px" width="10" height="10" viewBox="0 0 10 10"><path d="M0.4 0.6 H8.6 L4.5 9.2 Z" fill="#111"/></svg>
<span class="t" style="left:15.10px;top:202.72px;font-size:12.5px;color:#111;font-weight:bold;transform:scaleX(0.9258);">dipoleFolded</span>
<span class="t" style="left:19.40px;top:228.34px;font-size:12px;color:#1c1c1c;transform:scaleX(0.9564);">Length (m)</span>
<div class="a" style="left:232px;top:226.15px;width:101.6px;height:22.6px;background:#fff;border:1px solid #cfcfcf;box-shadow:inset 0 0 0 0.5px #e6e6e6"></div>
<span class="t" style="left:233.60px;top:231.99px;font-size:12px;color:#111;">0.17105</span>
<span class="t" style="left:19.40px;top:259.72px;font-size:12px;color:#1c1c1c;transform:scaleX(0.9731);">Width (m)</span>
<div class="a" style="left:232px;top:257.7px;width:101.6px;height:22.6px;background:#fff;border:1px solid #cfcfcf;box-shadow:inset 0 0 0 0.5px #e6e6e6"></div>
<span class="t" style="left:233.60px;top:263.54px;font-size:12px;color:#111;">0.0018392</span>
<span class="t" style="left:19.40px;top:291.10px;font-size:12px;color:#1c1c1c;transform:scaleX(0.9600);">Spacing (m)</span>
<div class="a" style="left:232px;top:289.25px;width:101.6px;height:22.6px;background:#fff;border:1px solid #cfcfcf;box-shadow:inset 0 0 0 0.5px #e6e6e6"></div>
<span class="t" style="left:233.60px;top:295.09px;font-size:12px;color:#111;">0.0024523</span>
<span class="t" style="left:19.40px;top:322.48px;font-size:12px;color:#1c1c1c;transform:scaleX(0.9680);">Tilt (deg)</span>
<div class="a" style="left:232px;top:320.8px;width:101.6px;height:22.6px;background:#fff;border:1px solid #cfcfcf;box-shadow:inset 0 0 0 0.5px #e6e6e6"></div>
<span class="t" style="left:233.60px;top:326.64px;font-size:12px;color:#111;">0</span>
<span class="t" style="left:19.40px;top:353.86px;font-size:12px;color:#1c1c1c;transform:scaleX(0.9445);">TiltAxis</span>
<div class="a" style="left:232px;top:352.35px;width:101.6px;height:22.6px;background:#fff;border:1px solid #cfcfcf;box-shadow:inset 0 0 0 0.5px #e6e6e6"></div>
<span class="t" style="left:233.60px;top:358.19px;font-size:12px;color:#111;">[1 0 0]</span>
<svg class="a" style="left:5.5px;top:397px" width="11" height="11" viewBox="0 0 11 11"><path d="M0.5 0.5 L9.6 5.2 L0.5 9.9 Z" fill="#111"/></svg>
<span class="t" style="left:17.00px;top:396.24px;font-size:12px;color:#111;font-weight:bold;transform:scaleX(0.9867);">dipoleFolded - Conductor - metal</span>
<svg class="a" style="left:5.5px;top:425px" width="11" height="11" viewBox="0 0 11 11"><path d="M0.5 0.5 L9.6 5.2 L0.5 9.9 Z" fill="#111"/></svg>
<span class="t" style="left:17.00px;top:424.24px;font-size:12px;color:#111;font-weight:bold;transform:scaleX(0.9883);">dipoleFolded - Load - lumpedElement</span>
<div class="a" style="left:98.6px;top:446px;width:168.4px;height:26.8px;background:#e1e1e1;border:1px solid #b0b0b0"></div>
<span class="t" style="left:166.00px;top:454.04px;font-size:12px;color:#111;font-weight:bold;transform:scaleX(0.9900);">Apply</span>
<svg class="a" style="left:0;top:0" width="1215" height="838" viewBox="0 0 1215 838" shape-rendering="geometricPrecision"><polygon points="476.97,609.47 1115.15,359.81 1132.81,370.50 1132.81,392.69 494.63,642.35 476.97,631.66" fill="#ffffff"/><line x1="485.36" y1="628.38" x2="485.36" y2="606.19" stroke="#e2e2e2" stroke-width="0.9" /><line x1="485.36" y1="628.38" x2="503.01" y2="639.07" stroke="#e2e2e2" stroke-width="0.9" /><line x1="547.47" y1="604.08" x2="547.47" y2="581.89" stroke="#e2e2e2" stroke-width="0.9" /><line x1="547.47" y1="604.08" x2="565.12" y2="614.77" stroke="#e2e2e2" stroke-width="0.9" /><line x1="609.58" y1="579.78" x2="609.58" y2="557.59" stroke="#e2e2e2" stroke-width="0.9" /><line x1="609.58" y1="579.78" x2="627.23" y2="590.47" stroke="#e2e2e2" stroke-width="0.9" /><line x1="671.69" y1="555.48" x2="671.69" y2="533.29" stroke="#e2e2e2" stroke-width="0.9" /><line x1="671.69" y1="555.48" x2="689.34" y2="566.17" stroke="#e2e2e2" stroke-width="0.9" /><line x1="733.80" y1="531.18" x2="733.80" y2="509.00" stroke="#e2e2e2" stroke-width="0.9" /><line x1="733.80" y1="531.18" x2="751.45" y2="541.88" stroke="#e2e2e2" stroke-width="0.9" /><line x1="795.91" y1="506.88" x2="795.91" y2="484.70" stroke="#e2e2e2" stroke-width="0.9" /><line x1="795.91" y1="506.88" x2="813.56" y2="517.58" stroke="#e2e2e2" stroke-width="0.9" /><line x1="858.02" y1="482.59" x2="858.02" y2="460.40" stroke="#e2e2e2" stroke-width="0.9" /><line x1="858.02" y1="482.59" x2="875.67" y2="493.28" stroke="#e2e2e2" stroke-width="0.9" /><line x1="920.13" y1="458.29" x2="920.13" y2="436.10" stroke="#e2e2e2" stroke-width="0.9" /><line x1="920.13" y1="458.29" x2="937.78" y2="468.98" stroke="#e2e2e2" stroke-width="0.9" /><line x1="982.24" y1="433.99" x2="982.24" y2="411.80" stroke="#e2e2e2" stroke-width="0.9" /><line x1="982.24" y1="433.99" x2="999.89" y2="444.68" stroke="#e2e2e2" stroke-width="0.9" /><line x1="1044.35" y1="409.69" x2="1044.35" y2="387.51" stroke="#e2e2e2" stroke-width="0.9" /><line x1="1044.35" y1="409.69" x2="1062.00" y2="420.38" stroke="#e2e2e2" stroke-width="0.9" /><line x1="1106.46" y1="385.39" x2="1106.46" y2="363.21" stroke="#e2e2e2" stroke-width="0.9" /><line x1="1106.46" y1="385.39" x2="1124.11" y2="396.09" stroke="#e2e2e2" stroke-width="0.9" /><line x1="491.02" y1="640.16" x2="1129.20" y2="390.50" stroke="#e2e2e2" stroke-width="0.9" /><line x1="1129.20" y1="390.50" x2="1129.20" y2="368.31" stroke="#e2e2e2" stroke-width="0.9" /><line x1="480.32" y1="633.68" x2="1118.50" y2="384.02" stroke="#e2e2e2" stroke-width="0.9" /><line x1="1118.50" y1="384.02" x2="1118.50" y2="361.83" stroke="#e2e2e2" stroke-width="0.9" /><line x1="476.97" y1="628.11" x2="1115.15" y2="378.44" stroke="#e2e2e2" stroke-width="0.9" /><line x1="1115.15" y1="378.44" x2="1132.81" y2="389.14" stroke="#e2e2e2" stroke-width="0.9" /><line x1="476.97" y1="613.91" x2="1115.15" y2="364.24" stroke="#e2e2e2" stroke-width="0.9" /><line x1="1115.15" y1="364.24" x2="1132.81" y2="374.94" stroke="#e2e2e2" stroke-width="0.9" /><line x1="476.97" y1="609.47" x2="1115.15" y2="359.81" stroke="#2e2e2e" stroke-width="1.0" stroke-linecap="square"/><line x1="476.97" y1="631.66" x2="1115.15" y2="381.99" stroke="#2e2e2e" stroke-width="1.0" stroke-linecap="square"/><line x1="494.63" y1="642.35" x2="1132.81" y2="392.69" stroke="#2e2e2e" stroke-width="1.0" stroke-linecap="square"/><line x1="476.97" y1="609.47" x2="476.97" y2="631.66" stroke="#2e2e2e" stroke-width="1.0" stroke-linecap="square"/><line x1="476.97" y1="631.66" x2="494.63" y2="642.35" stroke="#2e2e2e" stroke-width="1.0" stroke-linecap="square"/><line x1="1115.15" y1="359.81" x2="1115.15" y2="381.99" stroke="#2e2e2e" stroke-width="1.0" stroke-linecap="square"/><line x1="1115.15" y1="359.81" x2="1132.81" y2="370.50" stroke="#2e2e2e" stroke-width="1.0" stroke-linecap="square"/><line x1="1132.81" y1="370.50" x2="1132.81" y2="392.69" stroke="#2e2e2e" stroke-width="1.0" stroke-linecap="square"/><line x1="1115.15" y1="381.99" x2="1132.81" y2="392.69" stroke="#2e2e2e" stroke-width="1.0" stroke-linecap="square"/><line x1="503.01" y1="639.07" x2="517.41" y2="648.07" stroke="#2e2e2e" stroke-width="1.0" /><line x1="565.12" y1="614.77" x2="579.52" y2="623.77" stroke="#2e2e2e" stroke-width="1.0" /><line x1="627.23" y1="590.47" x2="641.63" y2="599.47" stroke="#2e2e2e" stroke-width="1.0" /><line x1="689.34" y1="566.17" x2="703.74" y2="575.17" stroke="#2e2e2e" stroke-width="1.0" /><line x1="751.45" y1="541.88" x2="765.85" y2="550.88" stroke="#2e2e2e" stroke-width="1.0" /><line x1="813.56" y1="517.58" x2="827.96" y2="526.58" stroke="#2e2e2e" stroke-width="1.0" /><line x1="875.67" y1="493.28" x2="890.07" y2="502.28" stroke="#2e2e2e" stroke-width="1.0" /><line x1="937.78" y1="468.98" x2="952.18" y2="477.98" stroke="#2e2e2e" stroke-width="1.0" /><line x1="999.89" y1="444.68" x2="1014.29" y2="453.68" stroke="#2e2e2e" stroke-width="1.0" /><line x1="1062.00" y1="420.38" x2="1076.40" y2="429.38" stroke="#2e2e2e" stroke-width="1.0" /><line x1="1124.11" y1="396.09" x2="1138.51" y2="405.09" stroke="#2e2e2e" stroke-width="1.0" /><line x1="491.02" y1="640.16" x2="475.62" y2="646.46" stroke="#2e2e2e" stroke-width="1.0" /><line x1="480.32" y1="633.68" x2="464.92" y2="639.98" stroke="#2e2e2e" stroke-width="1.0" /><line x1="476.97" y1="628.11" x2="463.37" y2="619.61" stroke="#2e2e2e" stroke-width="1.0" /><line x1="476.97" y1="613.91" x2="463.37" y2="605.41" stroke="#2e2e2e" stroke-width="1.0" /><polygon points="536.79,604.86 1067.98,397.05 1072.41,399.74 541.22,607.55" fill="#f3c535" stroke="#17140c" stroke-width="1.0" stroke-linejoin="round"/><polygon points="1067.98,397.05 1067.98,388.40 1072.41,391.09 1072.41,399.74" fill="#e9b92f" stroke="#17140c" stroke-width="1.0" stroke-linejoin="round"/><polygon points="536.79,596.21 1067.98,388.40 1072.41,391.09 541.22,598.90" fill="#f3c535" stroke="#17140c" stroke-width="1.0" stroke-linejoin="round"/><polygon points="536.79,604.86 536.79,596.21 541.22,598.90 541.22,607.55" fill="#f0c033" stroke="#17140c" stroke-width="1.0" stroke-linejoin="round"/><line x1="1072.41" y1="391.09" x2="1072.41" y2="399.74" stroke="#2a1a10" stroke-width="1.4" /><ellipse cx="804.60" cy="501.50" rx="2.7" ry="2.3" fill="#b3122a"/></svg>
<div class="a" style="left:0;top:0;width:1215px;height:838px;will-change:transform;pointer-events:none"><!--GRAYWRAP-->
<span class="t" style="left:518.71px;top:651.91px;font-size:12px;color:#262626;transform:scaleX(0.9600);">-100</span>
<span class="t" style="left:580.82px;top:627.61px;font-size:12px;color:#262626;transform:scaleX(0.9600);">-80</span>
<span class="t" style="left:642.93px;top:603.31px;font-size:12px;color:#262626;transform:scaleX(0.9600);">-60</span>
<span class="t" style="left:705.04px;top:579.01px;font-size:12px;color:#262626;transform:scaleX(0.9600);">-40</span>
<span class="t" style="left:767.15px;top:554.72px;font-size:12px;color:#262626;transform:scaleX(0.9600);">-20</span>
<span class="t" style="left:829.26px;top:530.42px;font-size:12px;color:#262626;transform:scaleX(0.9600);">0</span>
<span class="t" style="left:891.37px;top:506.12px;font-size:12px;color:#262626;transform:scaleX(0.9600);">20</span>
<span class="t" style="left:953.48px;top:481.82px;font-size:12px;color:#262626;transform:scaleX(0.9600);">40</span>
<span class="t" style="left:1015.59px;top:457.52px;font-size:12px;color:#262626;transform:scaleX(0.9600);">60</span>
<span class="t" style="left:1077.70px;top:433.23px;font-size:12px;color:#262626;transform:scaleX(0.9600);">80</span>
<span class="t" style="left:1139.81px;top:408.93px;font-size:12px;color:#262626;transform:scaleX(0.9600);">100</span>
<span class="t" style="left:454.53px;top:598.84px;font-size:12px;color:#262626;">2</span>
<span class="t" style="left:450.53px;top:612.64px;font-size:12px;color:#262626;">-2</span>
<span class="t" style="left:461.80px;top:644.00px;font-size:12px;color:#262626;transform-origin:0 0;transform:rotate(-58deg) scaleX(1.000) translate(-50%,-50%);">2</span>
<span class="t" style="left:471.30px;top:652.00px;font-size:12px;color:#262626;transform-origin:0 0;transform:rotate(-58deg) scaleX(1.000) translate(-50%,-50%);">-2</span>
<span class="t" style="left:438.30px;top:620.20px;font-size:12.6px;color:#262626;transform-origin:0 0;transform:rotate(-90deg) scaleX(1.072) translate(-50%,-50%);">z (mm)</span>
<span class="t" style="left:708.20px;top:614.03px;font-size:12.6px;color:#262626;transform:scaleX(1.0565);">x (mm)</span>
<span class="t" style="left:399.80px;top:676.43px;font-size:12.6px;color:#262626;transform:scaleX(1.0616);">y (mm)</span>
<span class="t" style="left:710.00px;top:344.83px;font-size:13.2px;color:#111;font-weight:bold;transform:scaleX(0.9949);">dipoleFolded antenna element</span>
<div class="a" style="left:1063px;top:723.4px;width:113.6px;height:53.2px;background:#fff;border:1.2px solid #6a6a6a"></div>
<div class="a" style="left:1084.4px;top:730.8px;width:44.8px;height:16.2px;background:#e3b93e"></div>
<div class="a" style="left:1084px;top:753px;width:45.6px;height:17px;background:#b7182f"></div>
<span class="t" style="left:1132.80px;top:734.26px;font-size:10.8px;color:#111;">PEC</span>
<span class="t" style="left:1132.80px;top:757.16px;font-size:10.8px;color:#111;">feed</span>
</div>
</body></html>
